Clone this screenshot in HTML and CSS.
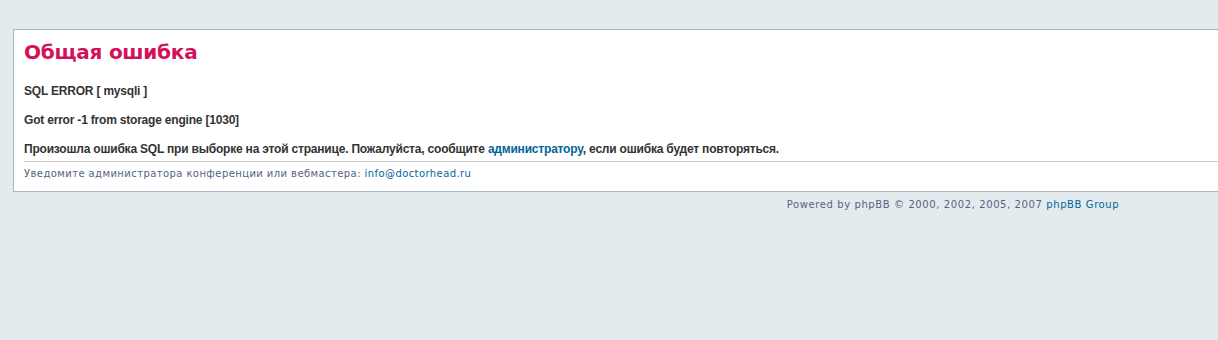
FILE: index.html
```html
<!DOCTYPE html>
<html lang="ru">
<head>
<meta charset="utf-8">
<title>Общая ошибка</title>
<link rel="stylesheet" href="styles.css">
</head>
<body class="errorpage">
<div class="wrap">
  <div class="panel">
    <div class="content">
      <h1 class="title">Общая ошибка</h1>
      <div class="msg">SQL ERROR [ mysqli ]<br><br>Got error -1 from storage engine [1030]<br><br>Произошла ошибка SQL при выборке на этой странице. Пожалуйста, сообщите <a href="#">администратору</a>, если ошибка будет повторяться.</div>
      <p class="notify">Уведомите администратора конференции или вебмастера: <a href="#">info@doctorhead.ru</a></p>
    </div>
  </div>
  <div class="page-footer">Powered by phpBB &copy; 2000, 2002, 2005, 2007 <a href="#">phpBB Group</a></div>
</div>
</body>
</html>
```
FILE: styles.css
```css
* { margin: 0; padding: 0; }
html { overflow: hidden; background-color: #E4EBEE; height: 100%; }
body {
  font-family: Verdana, "DejaVu Sans", sans-serif;
  color: #536482;
  background: #E4EBEE;
  font-size: 10px;
}
a { color: #006699; text-decoration: none; }
.wrap {
  width: 1880px;
  padding: 29px 13px 15px 13px;
}
.panel {
  margin: 0 0 4px 0;
  background-color: #FFFFFF;
  border: 1px solid #A9B8C2;
}
.content { padding: 10px; }
.title {
  font-family: Verdana, "DejaVu Sans", sans-serif;
  font-size: 20px;
  font-weight: bold;
  line-height: 24px;
  letter-spacing: -0.25px;
  color: #D4105A;
}
.msg {
  margin-top: 20px;
  margin-bottom: 5px;
  padding-bottom: 5px;
  border-bottom: 1px solid #CCCCCC;
  color: #333333;
  font: bold 12px "Liberation Sans", Arial, sans-serif;
  line-height: 14.4px;
  letter-spacing: -0.2px;
}
.notify { line-height: 14px; font-size: 10px; letter-spacing: 0.42px; }
.page-footer {
  text-align: center;
  font-size: 10px;
  line-height: 14px;
  padding-top: 2px;
  letter-spacing: 0.6px;
}
```
